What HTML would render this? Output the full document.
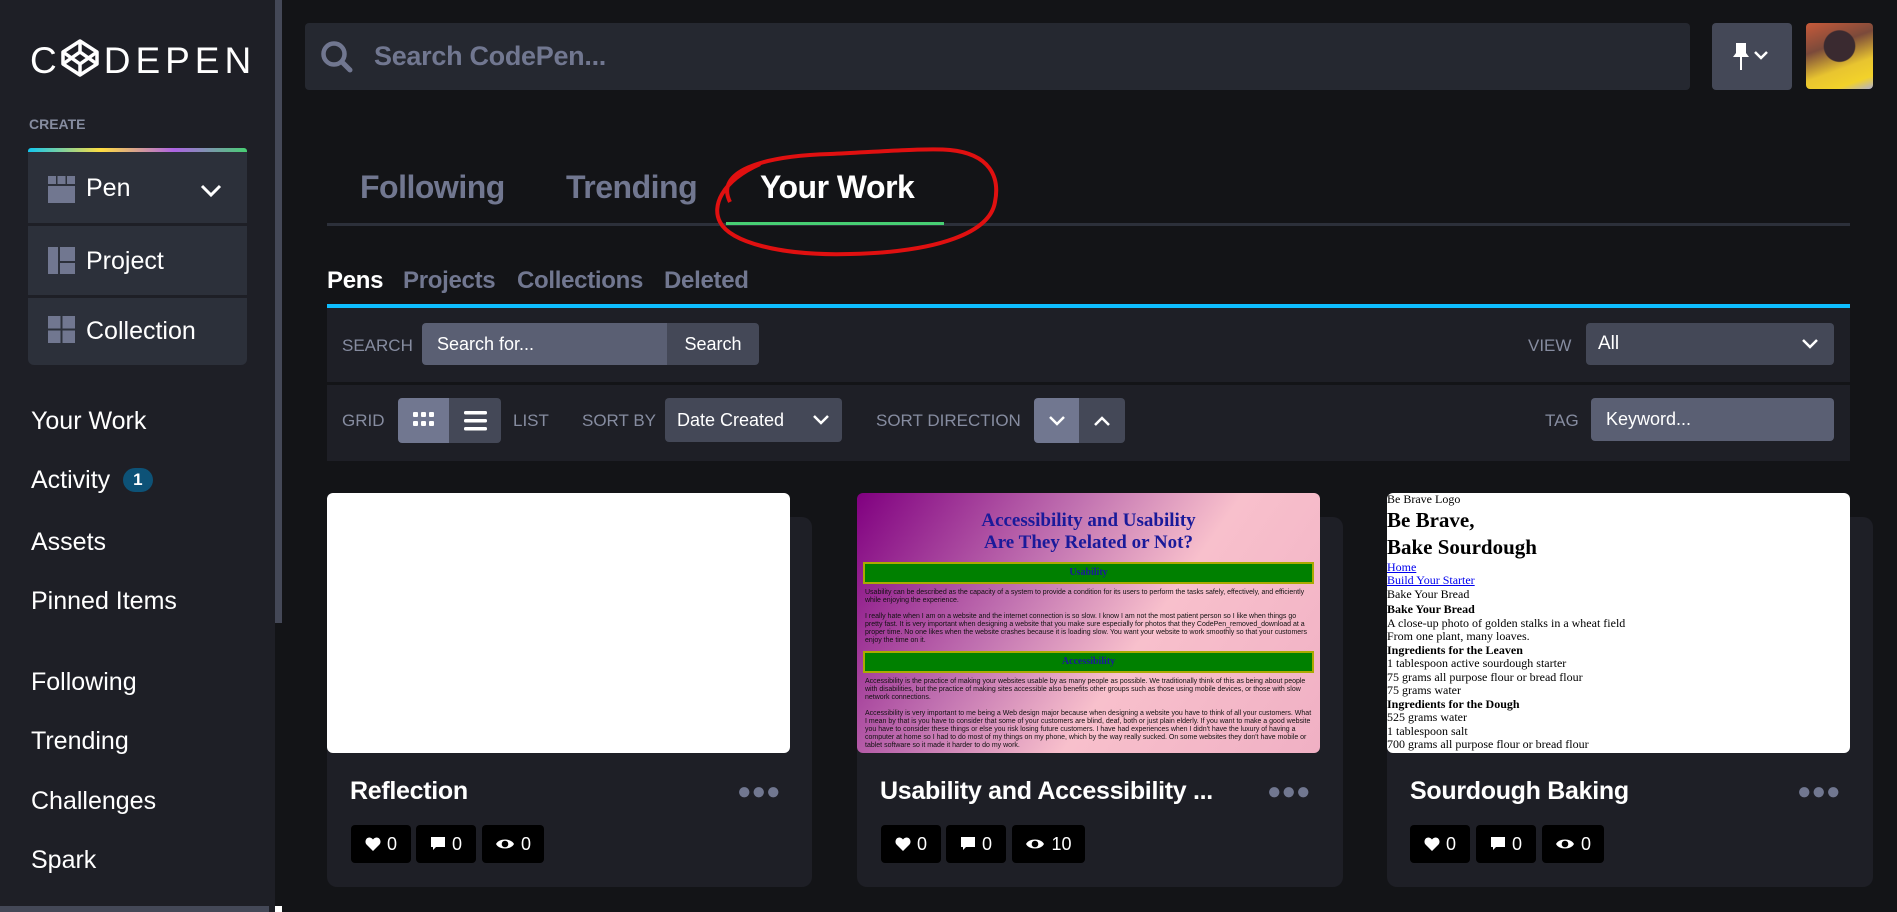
<!DOCTYPE html>
<html><head><meta charset="utf-8">
<style>
*{box-sizing:border-box;margin:0;padding:0}
body{width:1897px;height:912px;overflow:hidden;background:#131417;font-family:"Liberation Sans",sans-serif;position:relative;color:#fff}
.a{position:absolute}
.side{left:0;top:0;width:275px;height:912px;background:#1e1f26}
.sb{left:275px;top:0;width:7px;height:623px;background:#444857}
.nav{left:31px;font-size:25px;color:#fff;white-space:nowrap}
.cbox{left:28px;width:219px;background:#2c303a;font-size:25px;color:#fff}
.lbl{font-size:17px;color:#868ca0;white-space:nowrap}
.inp{background:#5a5f73;border-radius:4px;color:#fff;font-size:19px;padding-left:15px;display:flex;align-items:center}
.btn{background:#444857;color:#fff;font-size:19px;display:flex;align-items:center;justify-content:center}
.card{background:#1e1f26;border-radius:10px}
.prev{border-radius:6px;overflow:hidden}
.title{font-size:25px;font-weight:bold;color:#fff;white-space:nowrap;letter-spacing:-0.3px}
.dots{color:#717790;font-size:24px;letter-spacing:0px}
.stat{background:#000;border-radius:4px;height:38px;display:flex;align-items:center;justify-content:center;gap:6px;font-size:18px;color:#fff}
.tab{font-size:32px;font-weight:bold;color:#717790;white-space:nowrap;letter-spacing:-0.5px}
.st{font-size:24px;color:#717790;font-weight:bold;white-space:nowrap;letter-spacing:-0.3px}
</style></head><body>
<div class="a side"></div>
<div class="a sb"></div>
<div class="a" style="left:0;top:906px;width:269px;height:6px;background:#444857"></div>
<div class="a" style="left:275px;top:906px;width:7px;height:6px;background:#fff"></div>

<div class="a" style="left:30px;top:38px;font-size:37px;letter-spacing:5px;color:#fff;white-space:nowrap">C<svg width="40" height="40" viewBox="0 0 40 40" style="vertical-align:-5px;margin:0 4px 0 -2px"><g fill="none" stroke="#fff" stroke-width="3.5" stroke-linejoin="round"><path d="M20 3L37 14V26L20 37L3 26V14Z"/><path d="M20 3V14M20 26V37M3 14L20 26L37 14M3 26L20 14L37 26"/></g></svg>DEPEN</div>

<div class="a lbl" style="left:29px;top:116px;font-size:14px;font-weight:bold;color:#868ca0">CREATE</div>
<div class="a" style="left:28px;top:148px;width:219px;height:4px;border-radius:3px 3px 0 0;background:linear-gradient(90deg,#11c7f0,#ffdd40,#ae63e4,#47cf73)"></div>
<div class="a cbox" style="top:152px;height:71px"><svg class="a" style="left:20px;top:24px" width="27" height="27" viewBox="0 0 27 27" fill="#717790"><rect x="0" y="0" width="8" height="8"/><rect x="9.5" y="0" width="8" height="8"/><rect x="19" y="0" width="8" height="8"/><rect x="0" y="10" width="27" height="17"/></svg><span class="a" style="left:58px;top:22px">Pen</span><svg class="a" style="left:172px;top:32px" width="22" height="14" viewBox="0 0 22 14"><path d="M2 2L11 11L20 2" stroke="#fff" stroke-width="3" fill="none"/></svg></div>
<div class="a cbox" style="top:226px;height:69px"><svg class="a" style="left:20px;top:21px" width="27" height="27" viewBox="0 0 27 27" fill="#717790"><rect x="0" y="0" width="10" height="27"/><rect x="12" y="0" width="15" height="14"/><rect x="12" y="16" width="15" height="11"/></svg><span class="a" style="left:58px;top:21px">Project</span></div>
<div class="a cbox" style="top:298px;height:67px;border-radius:0 0 6px 6px"><svg class="a" style="left:20px;top:18px" width="27" height="27" viewBox="0 0 27 27" fill="#717790"><rect x="0" y="0" width="12.5" height="12.5"/><rect x="14.5" y="0" width="12.5" height="12.5"/><rect x="0" y="14.5" width="12.5" height="12.5"/><rect x="14.5" y="14.5" width="12.5" height="12.5"/></svg><span class="a" style="left:58px;top:19px">Collection</span></div>

<div class="a nav" style="top:407px">Your Work</div>
<div class="a nav" style="top:466px">Activity <span style="display:inline-block;background:#0d5277;border-radius:12px;font-size:17px;font-weight:bold;padding:2px 10px;vertical-align:3px;margin-left:6px">1</span></div>
<div class="a nav" style="top:528px">Assets</div>
<div class="a nav" style="top:587px">Pinned Items</div>
<div class="a nav" style="top:668px">Following</div>
<div class="a nav" style="top:727px">Trending</div>
<div class="a nav" style="top:787px">Challenges</div>
<div class="a nav" style="top:846px">Spark</div>

<div class="a" style="left:305px;top:23px;width:1385px;height:67px;background:#252830;border-radius:4px"></div>
<svg class="a" style="left:320px;top:40px" width="34" height="34" viewBox="0 0 34 34"><circle cx="14" cy="14" r="10.5" stroke="#717790" stroke-width="4.5" fill="none"/><path d="M22 22L30 30" stroke="#717790" stroke-width="5" stroke-linecap="round"/></svg>
<div class="a" style="left:374px;top:41px;font-size:27px;font-weight:bold;color:#717790;white-space:nowrap;letter-spacing:-0.3px">Search CodePen...</div>
<div class="a" style="left:1712px;top:23px;width:80px;height:67px;background:#444857;border-radius:4px"></div>
<svg class="a" style="left:1732px;top:43px" width="44" height="28" viewBox="0 0 44 28"><path d="M4 0H14V10L17 14H1L4 10Z M8 14H10V27H8Z" fill="#fff"/><path d="M23 9L29 15L35 9" stroke="#fff" stroke-width="2.5" fill="none"/></svg>
<div class="a" style="left:1806px;top:23px;width:67px;height:66px;border-radius:4px;background:radial-gradient(circle at 50% 35%,#3a2a30 0 28%,transparent 30%),linear-gradient(160deg,#c85a3a 0%,#7b4a3a 35%,#e8c430 65%,#f2d22a 85%,#b0b0d0 100%)"></div>

<div class="a" style="left:327px;top:223px;width:1523px;height:3px;background:#2c303a"></div>
<div class="a tab" style="left:360px;top:169px">Following</div>
<div class="a tab" style="left:566px;top:169px">Trending</div>
<div class="a tab" style="left:760px;top:169px;color:#fff">Your Work</div>
<div class="a" style="left:726px;top:222px;width:218px;height:3px;background:#47cf73"></div>
<svg class="a" style="left:700px;top:142px" width="305" height="124" viewBox="0 0 305 124"><path d="M30 60C15 30 60 14 130 12C190 9 230 6 250 8C290 12 300 35 295 60C290 90 240 110 150 112C80 114 30 100 20 80C12 65 20 40 60 22" fill="none" stroke="#e01010" stroke-width="4"/></svg>

<div class="a st" style="left:327px;top:267px;color:#fff">Pens</div>
<div class="a st" style="left:403px;top:267px">Projects</div>
<div class="a st" style="left:517px;top:267px">Collections</div>
<div class="a st" style="left:664px;top:267px">Deleted</div>
<div class="a" style="left:327px;top:304px;width:1523px;height:4px;background:#0ebeff"></div>

<div class="a" style="left:327px;top:308px;width:1523px;height:74px;background:#1e1f26"></div>
<div class="a" style="left:327px;top:385px;width:1523px;height:76px;background:#1e1f26"></div>
<div class="a lbl" style="left:342px;top:336px">SEARCH</div>
<div class="a inp" style="left:422px;top:323px;width:245px;height:42px;border-radius:4px 0 0 4px;font-size:18px">Search for...</div>
<div class="a btn" style="left:667px;top:323px;width:92px;height:42px;border-radius:0 4px 4px 0;font-size:18px">Search</div>
<div class="a lbl" style="left:1528px;top:336px">VIEW</div>
<div class="a btn" style="left:1586px;top:323px;width:248px;height:42px;border-radius:4px;justify-content:space-between;padding:0 15px 0 12px">All<svg width="18" height="12" viewBox="0 0 18 12"><path d="M2 2L9 9L16 2" stroke="#fff" stroke-width="2.5" fill="none"/></svg></div>

<div class="a lbl" style="left:342px;top:411px">GRID</div>
<div class="a" style="left:398px;top:398px;width:51px;height:45px;background:#717790;border-radius:4px 0 0 4px"></div>
<svg class="a" style="left:413px;top:410px" width="22" height="20" viewBox="0 0 22 20" fill="#fff"><rect x="0" y="2" width="5" height="5" rx="1"/><rect x="8" y="2" width="5" height="5" rx="1"/><rect x="16" y="2" width="5" height="5" rx="1"/><rect x="0" y="11" width="5" height="5" rx="1"/><rect x="8" y="11" width="5" height="5" rx="1"/><rect x="16" y="11" width="5" height="5" rx="1"/></svg>
<div class="a" style="left:449px;top:398px;width:52px;height:45px;background:#444857;border-radius:0 4px 4px 0"></div>
<svg class="a" style="left:464px;top:410px" width="23" height="21" viewBox="0 0 23 21" fill="#fff"><rect y="1" width="23" height="3.5" rx="1.5"/><rect y="9" width="23" height="3.5" rx="1.5"/><rect y="17" width="23" height="3.5" rx="1.5"/></svg>
<div class="a lbl" style="left:513px;top:411px">LIST</div>
<div class="a lbl" style="left:582px;top:411px">SORT BY</div>
<div class="a btn" style="left:665px;top:398px;width:177px;height:44px;border-radius:4px;justify-content:space-between;padding:0 12px;font-size:18px">Date Created<svg width="18" height="12" viewBox="0 0 18 12"><path d="M2 2L9 9L16 2" stroke="#fff" stroke-width="2.5" fill="none"/></svg></div>
<div class="a lbl" style="left:876px;top:411px">SORT DIRECTION</div>
<div class="a btn" style="left:1034px;top:398px;width:45px;height:45px;background:#717790;border-radius:4px 0 0 4px"><svg width="18" height="12" viewBox="0 0 18 12"><path d="M2 2L9 9L16 2" stroke="#fff" stroke-width="2.5" fill="none"/></svg></div>
<div class="a btn" style="left:1079px;top:398px;width:46px;height:45px;border-radius:0 4px 4px 0"><svg width="18" height="12" viewBox="0 0 18 12"><path d="M2 10L9 3L16 10" stroke="#fff" stroke-width="2.5" fill="none"/></svg></div>
<div class="a lbl" style="left:1545px;top:411px">TAG</div>
<div class="a inp" style="left:1591px;top:398px;width:243px;height:43px;font-size:18px">Keyword...</div>

<div class="a card" style="left:327px;top:517px;width:485px;height:370px"></div>
<div class="a card" style="left:857px;top:517px;width:486px;height:370px"></div>
<div class="a card" style="left:1387px;top:517px;width:486px;height:370px"></div>

<div class="a prev" style="left:327px;top:493px;width:463px;height:260px;background:#fff"></div>
<div class="a prev" style="left:857px;top:493px;width:463px;height:260px;background:linear-gradient(125deg,#800080 0%,#c070b0 35%,#f8c0cc 60%,#f0b0c4 100%);color:#111;font-family:'Liberation Serif',serif">
<div style="text-align:center;color:#1a1a9a;font-weight:bold;font-size:19px;line-height:22px;margin-top:17px">Accessibility and Usability<br>Are They Related or Not?</div>
<div style="margin:8px 6px 0;background:#008000;border:2px solid #aa0;height:22px;text-align:center;font-size:10px;color:#1a1a9a;font-weight:bold;line-height:18px">Usability</div>
<div style="font-family:'Liberation Sans';font-size:7px;line-height:8px;margin:5px 8px 0">Usability can be described as the capacity of a system to provide a condition for its users to perform the tasks safely, effectively, and efficiently while enjoying the experience.<br><br>I really hate when I am on a website and the internet connection is so slow. I know I am not the most patient person so I like when things go pretty fast. It is very important when designing a website that you make sure especially for photos that they CodePen_removed_download at a proper time. No one likes when the website crashes because it is loading slow. You want your website to work smoothly so that your customers enjoy the time on it.</div>
<div style="margin:6px 6px 0;background:#008000;border:2px solid #aa0;height:22px;text-align:center;font-size:10px;color:#1a1a9a;font-weight:bold;line-height:18px">Accessibility</div>
<div style="font-family:'Liberation Sans';font-size:7px;line-height:8px;margin:5px 8px 0">Accessibility is the practice of making your websites usable by as many people as possible. We traditionally think of this as being about people with disabilities, but the practice of making sites accessible also benefits other groups such as those using mobile devices, or those with slow network connections.<br><br>Accessibility is very important to me being a Web design major because when designing a website you have to think of all your customers. What I mean by that is you have to consider that some of your customers are blind, deaf, both or just plain elderly. If you want to make a good website you have to consider these things or else you risk losing future customers. I have had experiences when I didn't have the luxury of having a computer at home so I had to do most of my things on my phone, which by the way really sucked. On some websites they don't have mobile or tablet software so it made it harder to do my work.</div>
</div>
<div class="a prev" style="left:1387px;top:493px;width:463px;height:260px;background:#fff;color:#000;font-family:'Liberation Serif',serif;font-size:12px;line-height:13.5px;border-radius:6px">
<div>Be Brave Logo</div>
<div style="font-size:21px;font-weight:bold;line-height:27px">Be Brave,<br>Bake Sourdough</div>
<div style="color:#00e;text-decoration:underline">Home</div>
<div style="color:#00e;text-decoration:underline">Build Your Starter</div>
<div>Bake Your Bread</div>
<div style="font-weight:bold;margin-top:2px">Bake Your Bread</div>
<div>A close-up photo of golden stalks in a wheat field</div>
<div>From one plant, many loaves.</div>
<div style="font-weight:bold">Ingredients for the Leaven</div>
<div>1 tablespoon active sourdough starter</div>
<div>75 grams all purpose flour or bread flour</div>
<div>75 grams water</div>
<div style="font-weight:bold">Ingredients for the Dough</div>
<div>525 grams water</div>
<div>1 tablespoon salt</div>
<div>700 grams all purpose flour or bread flour</div>
</div>

<div class="a title" style="left:350px;top:777px">Reflection</div>
<div class="a title" style="left:880px;top:777px">Usability and Accessibility ...</div>
<div class="a title" style="left:1410px;top:777px">Sourdough Baking</div>
<div class="a dots" style="left:737px;top:778px">●●●</div>
<div class="a dots" style="left:1267px;top:778px">●●●</div>
<div class="a dots" style="left:1797px;top:778px">●●●</div>

<svg width="0" height="0" style="position:absolute"><defs>
<symbol id="h" viewBox="0 0 16 16"><path d="M8 15L1.5 8.5C-0.5 6.5 0.5 1.5 4.5 1.5C6.5 1.5 8 3.5 8 3.5C8 3.5 9.5 1.5 11.5 1.5C15.5 1.5 16.5 6.5 14.5 8.5Z" fill="#fff"/></symbol>
<symbol id="c" viewBox="0 0 16 16"><path d="M1 1H15V11H6L3 14V11H1Z" fill="#fff"/></symbol>
<symbol id="e" viewBox="0 0 20 14"><path d="M1 7C4 1 16 1 19 7C16 13 4 13 1 7Z" fill="#fff"/><circle cx="10" cy="7" r="3.3" fill="#000"/></symbol>
</defs></svg>
<div class="a stat" style="left:351px;top:825px;width:60px"><svg width="16" height="16"><use href="#h"/></svg>0</div>
<div class="a stat" style="left:416px;top:825px;width:60px"><svg width="16" height="16"><use href="#c"/></svg>0</div>
<div class="a stat" style="left:482px;top:825px;width:62px"><svg width="20" height="14"><use href="#e"/></svg>0</div>
<div class="a stat" style="left:881px;top:825px;width:60px"><svg width="16" height="16"><use href="#h"/></svg>0</div>
<div class="a stat" style="left:946px;top:825px;width:60px"><svg width="16" height="16"><use href="#c"/></svg>0</div>
<div class="a stat" style="left:1012px;top:825px;width:73px"><svg width="20" height="14"><use href="#e"/></svg>10</div>
<div class="a stat" style="left:1410px;top:825px;width:60px"><svg width="16" height="16"><use href="#h"/></svg>0</div>
<div class="a stat" style="left:1476px;top:825px;width:60px"><svg width="16" height="16"><use href="#c"/></svg>0</div>
<div class="a stat" style="left:1542px;top:825px;width:62px"><svg width="20" height="14"><use href="#e"/></svg>0</div>
</body></html>
